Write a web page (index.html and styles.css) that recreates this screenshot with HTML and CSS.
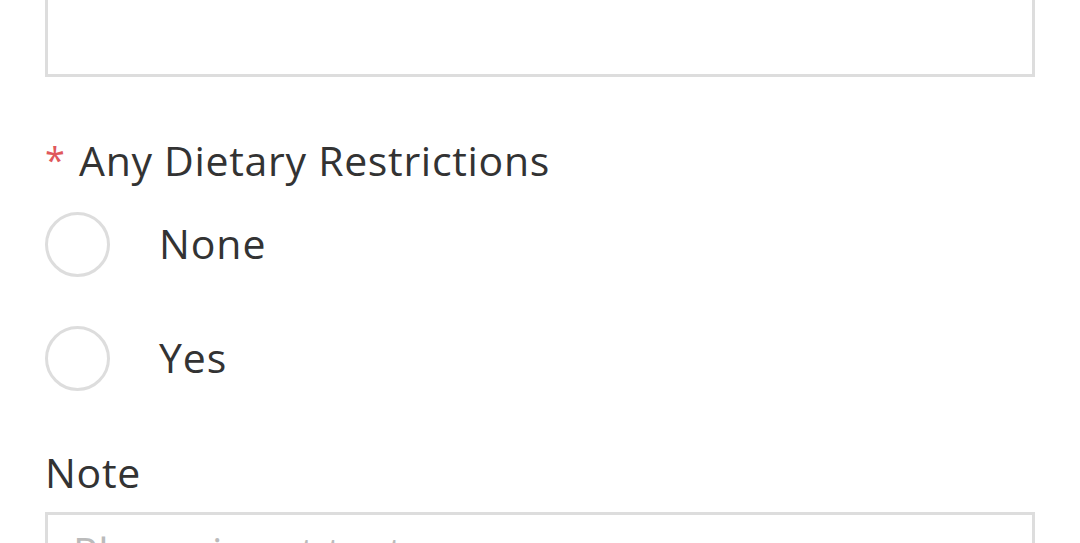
FILE: index.html
```html
<!DOCTYPE html>
<html>
<head>
<meta charset="utf-8">
<link rel="stylesheet" href="styles.css">
</head>
<body>
<div class="form">
  <div class="textarea top-box"></div>
  <div class="field">
    <div class="label"><span class="req">*</span>Any Dietary Restrictions</div>
    <div class="options">
      <label class="option"><span class="radio"></span><span class="opt-text">None</span></label>
      <label class="option"><span class="radio"></span><span class="opt-text">Yes</span></label>
    </div>
  </div>
  <div class="field note">
    <div class="label plain">Note</div>
    <div class="textarea note-box"><span class="placeholder">Please input text</span></div>
  </div>
</div>
</body>
</html>
```

FILE: styles.css
```css
html, body {
  margin: 0;
  padding: 0;
  background: #ffffff;
  overflow: hidden;
}
body {
  font-family: "Open Sans", "Noto Sans", sans-serif;
  color: #333333;
  width: 1080px;
  height: 543px;
}
.form {
  padding: 0 45px;
  display: flex;
  flex-direction: column;
}
.textarea {
  border: 3px solid #dddddd;
  box-sizing: border-box;
  background: #fff;
}
.top-box {
  margin-top: -20px;
  height: 97px;
  width: 990px;
}
.field {
  display: flex;
  flex-direction: column;
}
.label {
  font-size: 41px;
  letter-spacing: 0.7px;
  line-height: 54px;
  margin-top: 56px;
  display: flex;
  align-items: flex-start;
}
.req {
  color: #e0585b;
  font-size: 36px;
  width: 34px;
  line-height: 54px;
  letter-spacing: 0;
}
.options {
  display: flex;
  flex-direction: column;
  gap: 49px;
  margin-top: 25px;
}
.option {
  display: flex;
  align-items: center;
  height: 65px;
}
.radio {
  width: 65px;
  height: 65px;
  border: 3px solid #dddddd;
  border-radius: 50%;
  box-sizing: border-box;
  margin-right: 49px;
  flex: none;
}
.opt-text {
  font-size: 41px;
  letter-spacing: 0.9px;
  line-height: 54px;
  margin-top: -3px;
}
.note .label {
  margin-top: 54px;
}
.note-box {
  margin-top: 13px;
  height: 120px;
  width: 990px;
  padding: 9px 25px;
}
.placeholder {
  color: #bbbbbb;
  font-size: 41px;
  letter-spacing: 0.7px;
  line-height: 54px;
}
```
